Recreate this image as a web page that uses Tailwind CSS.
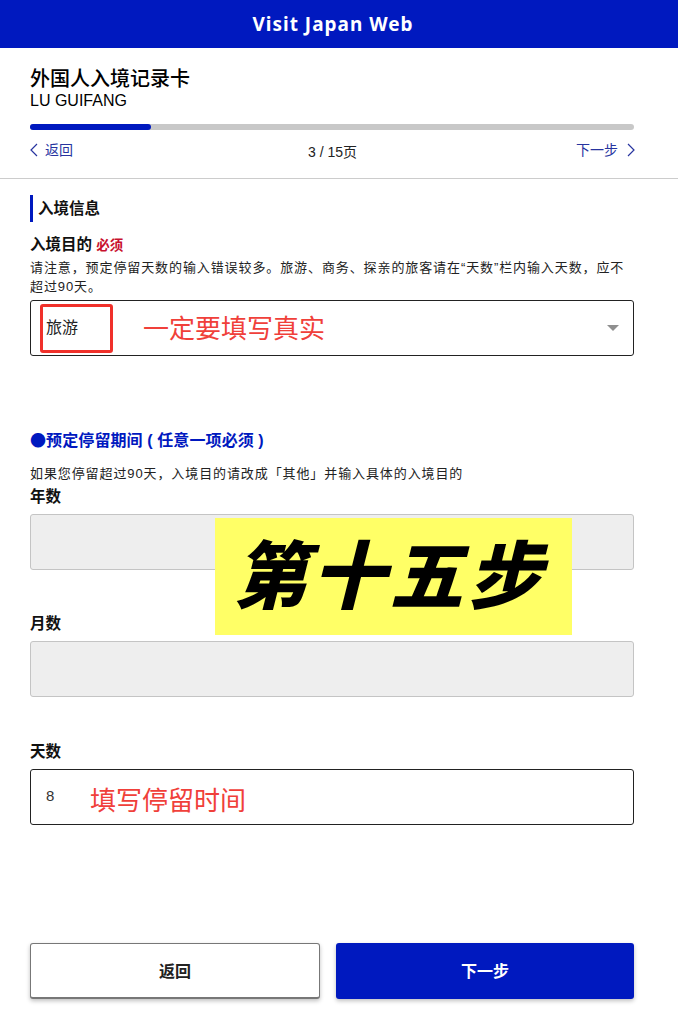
<!DOCTYPE html>
<html>
  <head>
    <meta charset="UTF-8" />
    <script src="https://cdn.jsdelivr.net/npm/@tailwindcss/browser@4"></script>
    <title>Visit Japan Web</title>
  </head>
  <body class="bg-white text-[#111] font-['Liberation_Sans','Noto_Sans_CJK_SC',sans-serif]">
    <div class="relative h-[1023px] w-[678px] overflow-hidden">
      <header class="flex h-[48px] items-center justify-center bg-[#0019bf] pr-[12px] font-['Noto_Sans',sans-serif] text-[19px] font-bold tracking-[1px] text-white">Visit Japan Web</header>

      <div class="h-[131px] border-b border-[#ccc] pr-[44px] pl-[30px] pt-[19px]">
        <h1 class="text-[20px] leading-[24px] font-medium text-black">外国人入境记录卡</h1>
        <p class="mt-[1px] text-[16px] leading-[18px] text-black">LU GUIFANG</p>
        <div class="mt-[14px] h-[6px] w-[604px] rounded-full bg-[#c8c8c8]">
          <div class="h-[6px] w-[121px] rounded-full bg-[#0019bf]"></div>
        </div>
        <div class="mt-[10px] flex items-start justify-between">
          <a class="flex items-center gap-[7px] text-[14px] leading-[20px] text-[#27349f]">
            <svg width="8" height="14" viewBox="0 0 8 14" fill="none" stroke="#27349f" stroke-width="1.2"><path d="M7 1 1 7l6 6" /></svg>
            返回
          </a>
          <span class="mt-[4px] ml-[16px] text-[14px] leading-[16px] text-[#222]">3 / 15页</span>
          <a class="mr-[-1px] flex items-center gap-[9px] text-[14px] leading-[20px] text-[#27349f]">
            下一步
            <svg width="8" height="14" viewBox="0 0 8 14" fill="none" stroke="#27349f" stroke-width="1.2"><path d="m1 1 6 6-6 6" /></svg>
          </a>
        </div>
      </div>

      <main class="pr-[44px] pl-[30px]">
        <h2 class="mt-[16px] flex h-[27px] items-center border-l-[3px] border-[#0019bf] pl-[5px] text-[15.5px] font-bold">入境信息</h2>

        <label class="mt-[14px] block text-[15.5px] leading-[18px] font-bold">入境目的 <span class="text-[13.5px] text-[#c8102e]">必须</span></label>
        <p class="mt-[3px] text-[13px] leading-[19px] tracking-[0.9px] whitespace-nowrap text-[#222]">请注意，预定停留天数的输入错误较多。旅游、商务、探亲的旅客请在“天数”栏内输入天数，应不<br />超过90天。</p>
        <div class="mt-[4px] flex h-[56px] items-center justify-between rounded-[3px] border border-[#222] pr-[14px] pl-[15px] text-[16px] text-[#222]">
          旅游
          <span class="h-0 w-0 border-x-[6px] border-t-[6px] border-x-transparent border-t-[#8f8f8f]"></span>
        </div>

        <h3 class="mt-[72px] text-[16px] leading-[22px] font-bold tracking-[0.1px] text-[#0019bf]"><span class="font-['Noto_Sans_CJK_SC']">●</span>预定停留期间 ( 任意一项必须 )</h3>
        <p class="mt-[13px] text-[13px] leading-[18px] tracking-[0.9px] text-[#222]">如果您停留超过90天，入境目的请改成「其他」并输入具体的入境目的</p>
        <label class="mt-[5px] block text-[15.5px] leading-[18px] font-bold">年数</label>
        <div class="mt-[8px] h-[56px] rounded-[3px] border border-[#c4c4c4] bg-[#eeeeee]"></div>

        <label class="mt-[45px] block text-[15.5px] leading-[18px] font-bold">月数</label>
        <div class="mt-[8px] h-[56px] rounded-[3px] border border-[#c4c4c4] bg-[#eeeeee]"></div>

        <label class="mt-[46px] block text-[15.5px] leading-[18px] font-bold">天数</label>
        <div class="mt-[8px] flex h-[56px] items-center rounded-[3px] border border-[#222] pb-[2px] pl-[15px] text-[15px] text-[#333]">8</div>

        <div class="mt-[118px] flex gap-[16px]">
          <button class="h-[56px] w-[290px] rounded-[3px] border border-[#777] border-b-2 bg-white pt-[2px] text-[16px] font-bold text-[#222] shadow-[0_2px_4px_rgba(0,0,0,0.25)]">返回</button>
          <button class="h-[56px] w-[298px] rounded-[3px] bg-[#0019bf] pt-[2px] text-[16px] font-bold text-white shadow-[0_2px_4px_rgba(0,0,0,0.25)]">下一步</button>
        </div>
      </main>

      <!-- annotations pasted over the screenshot -->
      <div class="absolute top-[304px] left-[40px] h-[49px] w-[73px] rounded-[3px] border-[3px] border-[#f0302a]"></div>
      <span class="absolute top-[311px] left-[143px] text-[26px] leading-[36px] whitespace-nowrap text-[#f0403a]">一定要填写真实</span>
      <span class="absolute top-[783px] left-[90px] text-[26px] leading-[36px] whitespace-nowrap text-[#f0403a]">填写停留时间</span>
      <div class="absolute top-[518px] left-[215px] flex h-[117px] w-[357px] items-center justify-center bg-[#ffff66] pt-[3px] pr-[8px] text-[74px] leading-none font-black tracking-[4px] text-black italic">第十五步</div>
    </div>
  </body>
</html>
